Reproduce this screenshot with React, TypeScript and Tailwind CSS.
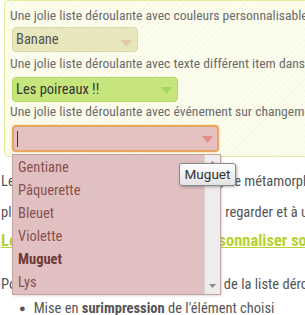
const cond = { fontFamily: 'Roboto, "Liberation Sans", sans-serif', fontStretch: "condensed" } as const;

function Arrow({ color, className }: { color: string; className: string }) {
  return (
    <svg className={className} width="11" height="7" viewBox="0 0 11 7">
      <polygon points="0,0 11,0 5.5,7" fill={color} />
    </svg>
  );
}

export default function App() {
  const items = ["Gentiane", "Pâquerette", "Bleuet", "Violette", "Muguet", "Lys"];
  return (
    <div className="relative w-[305px] h-[315px] overflow-hidden bg-white" style={cond}>
      {/* panel */}
      <div className="ml-[4px] w-[330px] rounded-tl-[4px] rounded-bl-[4px] border border-[#e6ee9c] bg-[repeating-linear-gradient(135deg,#fdfdee_0px,#fdfdee_3px,#f7f8e3_3px,#f7f8e3_4px)] pl-[5px] pt-[4px] pb-[4px] text-[13.6px] text-[#6b6b6b]">
        <div className="h-[20px] leading-[20px] whitespace-nowrap">Une jolie liste déroulante avec couleurs personnalisables</div>
        <div className="relative mt-[2px] ml-[2px] flex h-[25px] w-[126px] items-center rounded-[4px] border border-[#dcd9a8] bg-[#e8e6bc] pl-[3px] text-[14.5px] text-[#555]">
          Banane
          <Arrow color="#e3caa0" className="absolute right-[5px] top-[12px]" />
        </div>
        <div className="mt-[1px] h-[20px] leading-[20px] whitespace-nowrap">Une jolie liste déroulante avec texte différent item dans la liste</div>
        <div className="relative mt-[4px] ml-[2px] flex h-[25px] w-[166px] items-center rounded-[4px] border border-[#b5d865] bg-[#c6e57d] pl-[3px] text-[14.5px] text-[#333]">
          Les poireaux !!
          <Arrow color="#a3d75e" className="absolute right-[5px] top-[9px]" />
        </div>
        <div className="-mt-[1px] h-[20px] leading-[20px] whitespace-nowrap">Une jolie liste déroulante avec événement sur changement</div>
        <div className="relative mt-[4px] ml-[2px] w-[207px]">
          <div className="relative flex h-[27px] items-center rounded-[4px] border-2 border-[#e8a55e] bg-[#e3c1c1] pl-[3px] shadow-[0_0_2px_#f0c080]">
            <div className="h-[16px] w-[1px] bg-[#333]" />
            <Arrow color="#e58a88" className="absolute right-[4px] top-[9px]" />
          </div>
          {/* dropdown list */}
          <div className="absolute left-0 top-[29px] z-10 flex h-[141px] w-[209px] border border-[#c9a2a2] bg-[#e0c0c0] shadow-[1px_1px_2px_rgba(0,0,0,0.15)]">
            <div className="flex-1 pt-[1px]">
              {items.map((t) => (
                <div
                  key={t}
                  className={
                    "h-[23px] pl-[5px] leading-[23px] text-[14.5px] " +
                    (t === "Muguet" ? "font-bold text-[#6e3a3a]" : "text-[#8a5050]")
                  }
                >
                  {t}
                </div>
              ))}
            </div>
            <div className="relative w-[16px] border-l border-[#d8d4d4] bg-[#eeecec]">
              <svg className="absolute left-[4px] top-[6px]" width="7" height="4" viewBox="0 0 7 4">
                <polygon points="0,4 7,4 3.5,0" fill="#8a8a8a" />
              </svg>
              <svg className="absolute left-[4px] bottom-[6px]" width="7" height="4" viewBox="0 0 7 4">
                <polygon points="0,0 7,0 3.5,4" fill="#8a8a8a" />
              </svg>
            </div>
          </div>
        </div>
      </div>

      {/* body text */}
      <div className="flex flex-col pl-[1px] text-[14.5px] text-[#555]">
        <div className="mt-[14px] h-[22px] leading-[22px] whitespace-nowrap">Le plugin Chosen permet en deux clics, de métamorphoser vos listes</div>
        <div className="mt-[9px] h-[22px] leading-[22px] whitespace-nowrap">plus agréables et bien ergonomiques à regarder et à utiliser</div>
        <div className="mt-[6px] h-[22px] leading-[22px] whitespace-nowrap text-[16.5px] font-bold text-[#b6d335] underline">Les options possibles afin de personnaliser son select</div>
        <div className="mt-[22px] h-[22px] leading-[22px] whitespace-nowrap">Possibilité de personnaliser l'affichage de la liste déroulante</div>
        <div className="mt-[2px] flex h-[22px] items-center whitespace-nowrap pl-[18px] leading-[22px]">
          <span className="mr-[8px] text-[11px]">●</span>
          Mise en&nbsp;<b>surimpression</b>&nbsp;de l'élément choisi
        </div>
      </div>

      {/* tooltip */}
      <div
        className="absolute left-[179px] top-[163px] z-20 flex h-[23px] w-[57px] items-center justify-center rounded-[3px] border border-[#8a8a8a] bg-gradient-to-b from-[#fdfdfd] to-[#e4e4e4] text-[13.5px] text-[#333] shadow-[1px_1px_3px_rgba(0,0,0,0.3)]"
        style={{ fontFamily: "Roboto, sans-serif", fontStretch: "normal" }}
      >
        Muguet
      </div>
    </div>
  );
}
